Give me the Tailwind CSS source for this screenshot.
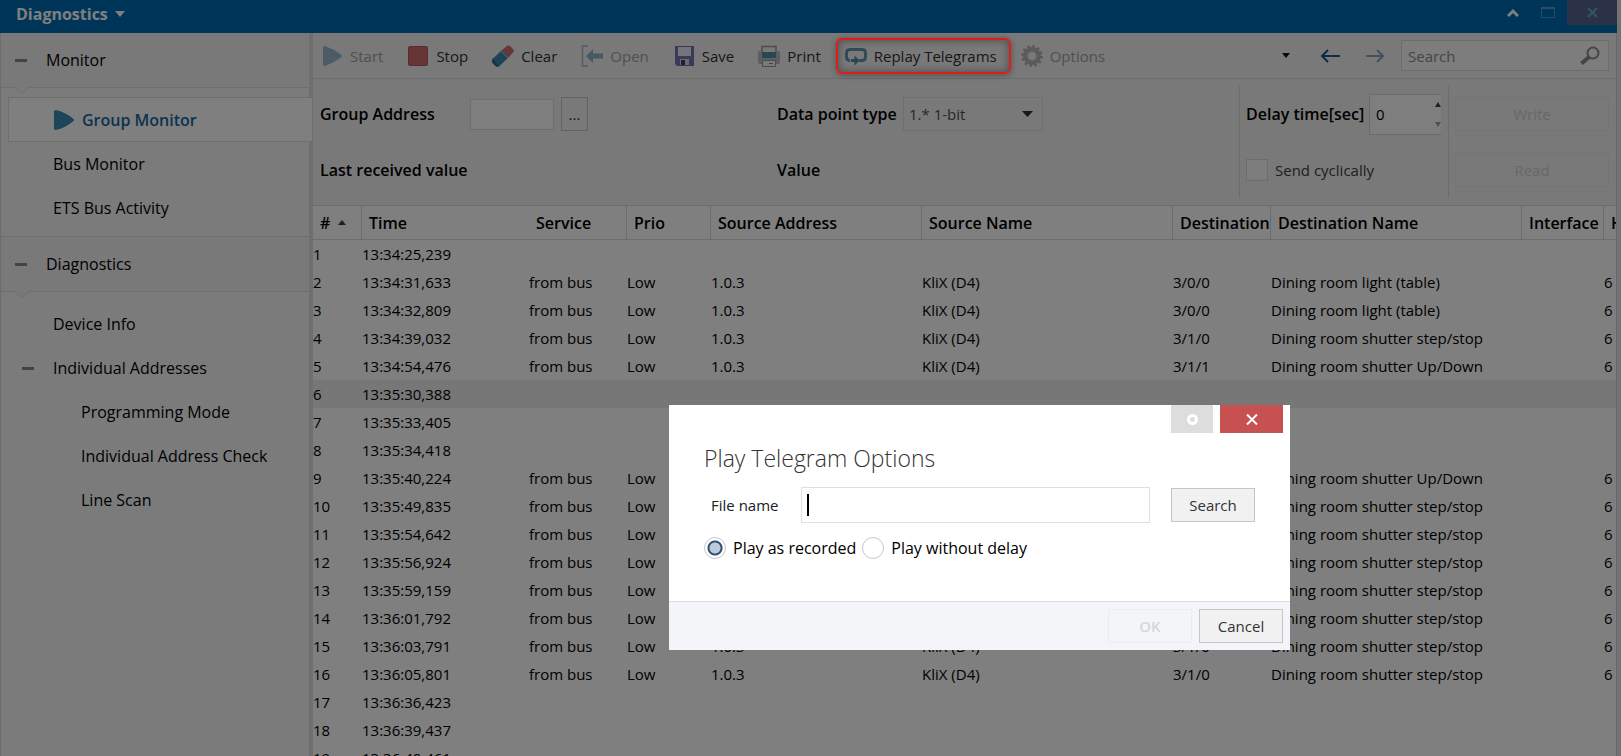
<!DOCTYPE html>
<html lang="en">
<head>
  <meta charset="UTF-8">
  <meta name="viewport" content="width=device-width, initial-scale=1.0">
  <title>Diagnostics - Group Monitor</title>
  <script src="https://cdn.jsdelivr.net/npm/@tailwindcss/browser@4"></script>
</head>
<body class="h-screen overflow-hidden flex flex-col bg-[#e6e6e6] pr-1 font-['Open_Sans','Noto_Sans',sans-serif] text-[15px] leading-5 text-black">

  <!-- Title bar -->
  <header class="h-[33px] shrink-0 flex items-start bg-[#006ab4] text-white">
    <button class="flex items-center gap-[7px] pl-4 pt-1 text-[16px] leading-5 font-bold">
      Diagnostics
      <svg class="w-[10px] h-[6px]" viewBox="0 0 10 6" fill="currentColor"><path d="M0 0h10L5 6z"/></svg>
    </button>
    <div class="ml-auto flex">
      <button class="w-8 h-[25px] flex items-center justify-center" aria-label="Collapse">
        <svg class="w-3 h-[9px]" viewBox="0 0 12 9" fill="none" stroke="currentColor" stroke-width="3"><path d="M1 8l5-5 5 5"/></svg>
      </button>
      <button class="w-[38px] h-[25px] flex items-center justify-center text-[#5596c8]" aria-label="Maximize">
        <svg class="w-[14px] h-[11px]" viewBox="0 0 14 11" fill="none" stroke="currentColor"><path d="M.5 1h13v9.500H.5z"/><path d="M0 1h14" stroke-width="2"/></svg>
      </button>
      <button class="w-[50px] h-[25px] flex items-center justify-center bg-[#56638c] text-[#6aa6d0]" aria-label="Close">
        <svg class="w-[11px] h-[11px]" viewBox="0 0 11 11" fill="none" stroke="currentColor" stroke-width="2"><path d="M1 1l9 9M10 1l-9 9"/></svg>
      </button>
    </div>
  </header>

  <div class="flex flex-1 min-h-0">

    <!-- Sidebar -->
    <nav class="w-[313px] shrink-0 bg-[#f6f6f6] border-l border-[#d8d8d8] border-r-4 border-r-[#dedede] text-[16px] leading-5">
      <div class="relative h-[55px] flex items-center border-b border-[#dcdcdc] bg-[#f3f3f3] pl-[14px]">
        <button class="w-3 h-[3px] bg-[#888] mr-[19px]" aria-label="Collapse Monitor"></button>
        Monitor
        <svg class="absolute left-[13px] top-[53px] w-4 h-2" viewBox="0 0 16 8" fill="#f3f3f3" stroke="#dcdcdc"><path d="M0 .5l8 7 8-7"/></svg>
      </div>
      <div class="pt-[9px] pb-[6px] border-b border-[#dcdcdc]">
        <a href="#" class="relative ml-[7px] -mr-[3px] h-[45px] flex items-center gap-2 pl-[45px] bg-white border border-r-0 border-[#dcdcdc] font-semibold text-[#15679f]">
          <svg class="w-5 h-5" viewBox="0 0 20 20" fill="#3c8bb4"><path d="M0 1.500Q0 0 2 0Q11 2 19 8.500Q21 10 19 11.500Q11 18 2 20Q0 20 0 18.500z"/></svg>
          Group Monitor
        </a>
        <a href="#" class="h-11 flex items-center pl-[52px]">Bus Monitor</a>
        <a href="#" class="h-11 flex items-center pl-[52px]">ETS Bus Activity</a>
      </div>
      <div class="relative h-[55px] flex items-center border-b border-[#dcdcdc] bg-[#f3f3f3] pl-[14px]">
        <button class="w-3 h-[3px] bg-[#888] mr-[19px]" aria-label="Collapse Diagnostics"></button>
        Diagnostics
        <svg class="absolute left-[13px] top-[53px] w-4 h-2" viewBox="0 0 16 8" fill="#f3f3f3" stroke="#dcdcdc"><path d="M0 .5l8 7 8-7"/></svg>
      </div>
      <div class="pt-[10px]">
        <a href="#" class="h-11 flex items-center pl-[52px]">Device Info</a>
        <div class="h-11 flex items-center pl-[21px]">
          <button class="w-3 h-[3px] bg-[#888] mr-[19px]" aria-label="Collapse Individual Addresses"></button>
          <a href="#">Individual Addresses</a>
        </div>
        <a href="#" class="h-11 flex items-center pl-20">Programming Mode</a>
        <a href="#" class="h-11 flex items-center pl-20">Individual Address Check</a>
        <a href="#" class="h-11 flex items-center pl-20">Line Scan</a>
      </div>
    </nav>

    <main class="flex-1 min-w-0 flex flex-col bg-white border-r border-[#d0d0d0]">

      <!-- Toolbar -->
      <div class="h-[46px] shrink-0 flex items-center pl-2 pr-[7px] bg-[#f2f2f2] border-b border-[#dadada] text-[#303030] whitespace-nowrap">
        <div class="flex items-center gap-6">
          <button class="flex items-center gap-[7px] text-[#a0a0a0]" disabled>
            <svg class="w-[22px] h-[22px]" viewBox="0 0 22 22" fill="#96b9c9"><path d="M2 2.500Q2 1 4 1Q13 4 20 9.500Q22 11 20 12.500Q13 18 4 21Q2 21 2 19.500z"/></svg>
            Start
          </button>
          <button class="flex items-center gap-[7px]">
            <svg class="w-[22px] h-[22px]" viewBox="0 0 22 22"><rect x="1.500" y="1.500" width="19" height="19" rx="1.500" fill="#d06a6e" stroke="#b85558"/></svg>
            Stop
          </button>
          <button class="flex items-center gap-[7px]">
            <svg class="w-[22px] h-[22px]" viewBox="0 0 22 22"><path d="M10 5L15 1Q16.500 0 18 1L21 4Q22.500 6 21 7.500L17 12z" fill="#cf6d70"/><path d="M10 5L17 12L7 21.500H4L0 18V14.500z" fill="#3d87aa"/><path d="M0 16L4 21.500H7L1 13.500z" fill="#276c90"/><path d="M9 6l7 7" stroke="#b8d0dc"/></svg>
            Clear
          </button>
          <button class="flex items-center gap-[7px] text-[#a0a0a0]" disabled>
            <svg class="w-[22px] h-[22px]" viewBox="0 0 22 22"><path d="M7 1H1.500V21H7" fill="none" stroke="#9fbccb" stroke-width="1.500"/><path d="M5 11l7-7v4.500h10v5H12V18z" fill="#8fb3c5"/></svg>
            Open
          </button>
          <button class="flex items-center gap-[7px]">
            <svg class="w-[22px] h-[22px]" viewBox="0 0 22 22"><path d="M2 1H21V21H4L2 19z" fill="#7274b0"/><path d="M5 2H18V11H5z" fill="#e8eaf4"/><path d="M7 14H16V20H7z" fill="#d4d5e2"/><path d="M8 15h4v5H8z" fill="#3d3f68"/></svg>
            Save
          </button>
          <button class="flex items-center gap-[7px]">
            <svg class="w-[22px] h-[22px]" viewBox="0 0 22 22"><path d="M4 7V1.500H18V7" fill="#f0f0f0" stroke="#999" stroke-width="1.500"/><path d="M1 6h3v7h14V6h3q1 0 1 2v9q0 2-2 2H2q-2 0-2-2V8q0-2 1-2z" fill="#bcbcbc"/><path d="M4 7h14v6H4z" fill="#5090ae"/><path d="M4.500 15.500h13v6h-13z" fill="#f4f4f4" stroke="#999"/><path d="M11 18.500h4" stroke="#888"/></svg>
            Print
          </button>
          <button class="relative flex items-center gap-[7px]">
            <svg class="w-[22px] h-[22px]" viewBox="0 0 22 22"><path d="M5 16Q1.500 15 1.500 12V8Q1.500 4.500 5.500 4.500H17Q20.500 4.500 20.500 8V12Q20.500 15.500 17 15.500H14" fill="none" stroke="#6099b6" stroke-width="3"/><path d="M6 14h3.500V10.500l5 5-5 5V17H6z" fill="#4c8cad"/></svg>
            Replay Telegrams
            <span class="absolute -left-[9px] -right-[14px] -top-[7px] -bottom-[7px] z-50 rounded-md border-2 border-[#e01b1b] shadow-[inset_0_0_8px_rgba(0,0,0,0.4),0_1px_6px_rgba(0,0,0,0.35)]"></span>
          </button>
          <button class="flex items-center gap-[7px] text-[#a0a0a0]" disabled>
            <svg class="w-[22px] h-[22px]" viewBox="0 0 22 22" fill="none" stroke="#b4b4b4"><circle cx="11" cy="11" r="9.500" stroke-width="3" stroke-dasharray="2.500 2.475"/><circle cx="11" cy="11" r="6.500" stroke-width="5"/><circle cx="11" cy="11" r="5" stroke="#cfcfcf" stroke-width="1"/></svg>
            Options
          </button>
        </div>
        <div class="ml-auto flex items-center">
          <button class="mr-[30px]" aria-label="More">
            <svg class="w-2 h-[5px]" viewBox="0 0 8 5"><path d="M0 0h8L4 5z" fill="#111"/></svg>
          </button>
          <button class="mr-[26px]" aria-label="Back">
            <svg class="w-5 h-[14px]" viewBox="0 0 20 14" fill="none" stroke="#23558f" stroke-width="2"><path d="M20 7H2M8 1L2 7l6 6"/></svg>
          </button>
          <button class="mr-[17px]" aria-label="Forward" disabled>
            <svg class="w-[18px] h-[14px]" viewBox="0 0 18 14" fill="none" stroke="#8a9fbb" stroke-width="2"><path d="M0 7h16M11 1l6 6-6 6"/></svg>
          </button>
          <div class="w-[208px] h-[31px] flex items-center bg-[#fafafa] border border-[#dadada] pl-[6px] pr-2">
            <input type="text" placeholder="Search" aria-label="Search" class="flex-1 min-w-0 outline-none placeholder:text-[#8c8c8c]">
            <svg class="w-5 h-5" viewBox="0 0 20 20" fill="none" stroke="#8a8a8a"><circle cx="13" cy="7" r="5.500" stroke-width="2"/><path d="M9 11l-7.500 6.500" stroke-width="4"/></svg>
          </div>
        </div>
      </div>

      <!-- Telegram parameters -->
      <div class="h-[126px] shrink-0 flex bg-[#f2f2f2] p-[7px] whitespace-nowrap">
        <div class="w-[457px] flex flex-col">
          <div class="h-14 flex items-center">
            <label for="groupAddress" class="w-[150px] text-[16px] font-semibold">Group Address</label>
            <input id="groupAddress" type="text" class="w-[84px] h-[31px] mr-[7px] bg-[#fdfdfd] border border-[#dcdcdc] px-1">
            <button class="w-[27px] h-[34px] border border-[#c4c4c4] text-[#303030]">...</button>
          </div>
          <div class="h-14 flex items-center text-[16px] font-semibold">Last received value</div>
        </div>
        <div class="flex-1 flex flex-col">
          <div class="h-14 flex items-center">
            <label for="dataType" class="w-[126px] text-[16px] font-semibold">Data point type</label>
            <div class="relative">
              <select id="dataType" class="appearance-none w-[140px] h-[34px] border border-[#dedede] pl-[5px] text-[#505050]">
                <option>1.* 1-bit</option>
              </select>
              <svg class="absolute right-[10px] top-[14px] w-[11px] h-[6px] pointer-events-none" viewBox="0 0 11 6"><path d="M0 0h11L5.500 6z" fill="#303030"/></svg>
            </div>
          </div>
          <div class="h-14 flex items-center text-[16px] font-semibold">Value</div>
        </div>
        <div class="w-[210px] flex flex-col border-x border-[#d8d8d8] pl-[6px]">
          <div class="h-14 flex items-center">
            <label for="delayTime" class="w-[123px] text-[16px] font-semibold">Delay time[sec]</label>
            <div class="relative">
              <input id="delayTime" type="text" value="0" class="w-[72px] h-[41px] bg-[#fdfdfd] border border-r-0 border-[#d8d8d8] pl-[6px]">
              <button class="absolute right-0 top-2" aria-label="Increase"><svg class="w-[6px] h-[5px]" viewBox="0 0 6 5"><path d="M0 5L3 0l3 5z" fill="#404040"/></svg></button>
              <button class="absolute right-0 bottom-2" aria-label="Decrease"><svg class="w-[6px] h-[5px]" viewBox="0 0 6 5"><path d="M0 0l3 5 3-5z" fill="#a0a0a0"/></svg></button>
            </div>
          </div>
          <label class="h-14 flex items-center gap-[7px] text-[#404040]">
            <input type="checkbox" class="appearance-none w-[22px] h-[22px] bg-[#fafafa] border border-[#dadada]">
            Send cyclically
          </label>
        </div>
        <div class="w-[160px] flex flex-col pl-[6px]">
          <div class="h-14 flex items-center"><button class="w-full h-[34px] border border-[#e8e8e8] text-[#d0d0d0]" disabled>Write</button></div>
          <div class="h-14 flex items-center"><button class="w-full h-[34px] border border-[#e8e8e8] text-[#d0d0d0]" disabled>Read</button></div>
        </div>
      </div>

      <!-- Telegram list -->
      <div class="flex-1 min-h-0 overflow-hidden">
        <table class="w-full table-fixed border-separate border-spacing-0 whitespace-nowrap">
          <thead>
            <tr class="h-[35px] text-left text-[16px] leading-5 [&>th]:pl-[7px] [&>th]:font-semibold [&>th]:border-y [&>th]:border-[#d8d8d8] [&>th]:overflow-hidden">
              <th class="w-[49px] border-r">
                <span class="flex items-center gap-2"># <svg class="w-2 h-[5px]" viewBox="0 0 8 5"><path d="M0 5L4 0l4 5z" fill="#404040"/></svg></span>
              </th>
              <th class="w-[167px]">Time</th>
              <th class="w-[98px] border-r">Service</th>
              <th class="w-[84px] border-r">Prio</th>
              <th class="w-[211px] border-r">Source Address</th>
              <th class="w-[251px] border-r">Source Name</th>
              <th class="w-[98px] border-r">Destination</th>
              <th class="w-[251px] border-r">Destination Name</th>
              <th class="w-[82px] border-r">Interface</th>
              <th>Hops</th>
            </tr>
          </thead>
          <tbody id="telegrams"></tbody>
        </table>
      </div>
    </main>
  </div>

  <div class="fixed inset-0 z-40 bg-black/50"></div>

  <!-- Play Telegram Options dialog -->
  <div role="dialog" aria-labelledby="dialogTitle" class="fixed left-[669px] top-[405px] z-50 w-[621px] bg-white">
    <div class="flex justify-end gap-[7px] pr-[7px]">
      <button class="w-[42px] h-7 flex items-center justify-center bg-[#dddddd]" aria-label="Help">
        <svg class="w-[11px] h-[11px]" viewBox="0 0 11 11" fill="none" stroke="#fff" stroke-width="3"><circle cx="5.500" cy="5.500" r="4"/></svg>
      </button>
      <button class="w-[63px] h-7 flex items-center justify-center bg-[#c75050]" aria-label="Close">
        <svg class="w-3 h-[11px]" viewBox="0 0 12 11" fill="none" stroke="#fff" stroke-width="2"><path d="M1 .5l10 10M11 .5l-10 10"/></svg>
      </button>
    </div>
    <div class="px-[35px] pt-[9px] h-[168px]">
      <h2 id="dialogTitle" class="text-[23px] leading-8 font-light text-[#333]">Play Telegram Options</h2>
      <div class="flex items-center mt-[13px] pl-[7px]">
        <label for="fileName" class="w-[90px] text-[#202020]">File name</label>
        <div class="relative mr-[21px]">
          <input id="fileName" type="text" class="block w-[349px] h-9 border border-[#e0e0e0] px-[5px] outline-none">
          <span class="absolute left-[6px] top-[7px] w-[2px] h-[22px] bg-black"></span>
        </div>
        <button class="w-[84px] h-[34px] bg-[#f1f1f1] border border-[#c6c6c6] text-[#333]">Search</button>
      </div>
      <div class="flex items-center gap-[6px] mt-[14px] text-[16px] leading-5">
        <label class="flex items-center gap-[7px]">
          <input type="radio" name="playMode" checked class="appearance-none w-[22px] h-[22px] rounded-full border border-[#c8c8c8] checked:bg-[radial-gradient(circle,#bccbdc_0_5px,#2f4f72_6px_7px,transparent_8px)]">
          Play as recorded
        </label>
        <label class="flex items-center gap-[7px]">
          <input type="radio" name="playMode" class="appearance-none w-[22px] h-[22px] rounded-full border border-[#c8c8c8]">
          Play without delay
        </label>
      </div>
    </div>
    <div class="h-[49px] flex items-center justify-end gap-[7px] pr-[7px] bg-[#f4f5f8] border-t border-[#dcdcdc]">
      <button class="w-[84px] h-[34px] border border-[#ededf0] font-semibold text-[#d6d7da]" disabled>OK</button>
      <button class="w-[84px] h-[34px] bg-[#f1f1f1] border border-[#c6c6c6] text-[#333]">Cancel</button>
    </div>
  </div>

  <script>
    const telegrams = [
      { time: '13:34:25,239' },
      { time: '13:34:31,633', dest: '3/0/0', name: 'Dining room light (table)' },
      { time: '13:34:32,809', dest: '3/0/0', name: 'Dining room light (table)' },
      { time: '13:34:39,032', dest: '3/1/0', name: 'Dining room shutter step/stop' },
      { time: '13:34:54,476', dest: '3/1/1', name: 'Dining room shutter Up/Down' },
      { time: '13:35:30,388', selected: true },
      { time: '13:35:33,405' },
      { time: '13:35:34,418' },
      { time: '13:35:40,224', dest: '3/1/1', name: 'Dining room shutter Up/Down' },
      { time: '13:35:49,835', dest: '3/1/0', name: 'Dining room shutter step/stop' },
      { time: '13:35:54,642', dest: '3/1/0', name: 'Dining room shutter step/stop' },
      { time: '13:35:56,924', dest: '3/1/0', name: 'Dining room shutter step/stop' },
      { time: '13:35:59,159', dest: '3/1/0', name: 'Dining room shutter step/stop' },
      { time: '13:36:01,792', dest: '3/1/0', name: 'Dining room shutter step/stop' },
      { time: '13:36:03,791', dest: '3/1/0', name: 'Dining room shutter step/stop' },
      { time: '13:36:05,801', dest: '3/1/0', name: 'Dining room shutter step/stop' },
      { time: '13:36:36,423' },
      { time: '13:36:39,437' },
      { time: '13:36:40,461' },
    ];

    document.getElementById('telegrams').innerHTML = telegrams.map((t, i) => `
      <tr class="h-7 ${t.selected ? 'bg-[#efefef]' : ''}">
        <td>${i + 1}</td>
        <td>${t.time}</td>
        <td>${t.dest ? 'from bus' : ''}</td>
        <td>${t.dest ? 'Low' : ''}</td>
        <td>${t.dest ? '1.0.3' : ''}</td>
        <td>${t.dest ? 'KliX (D4)' : ''}</td>
        <td>${t.dest || ''}</td>
        <td>${t.name || ''}</td>
        <td></td>
        <td>${t.dest ? '6' : ''}</td>
      </tr>`).join('');
  </script>
</body>
</html>
